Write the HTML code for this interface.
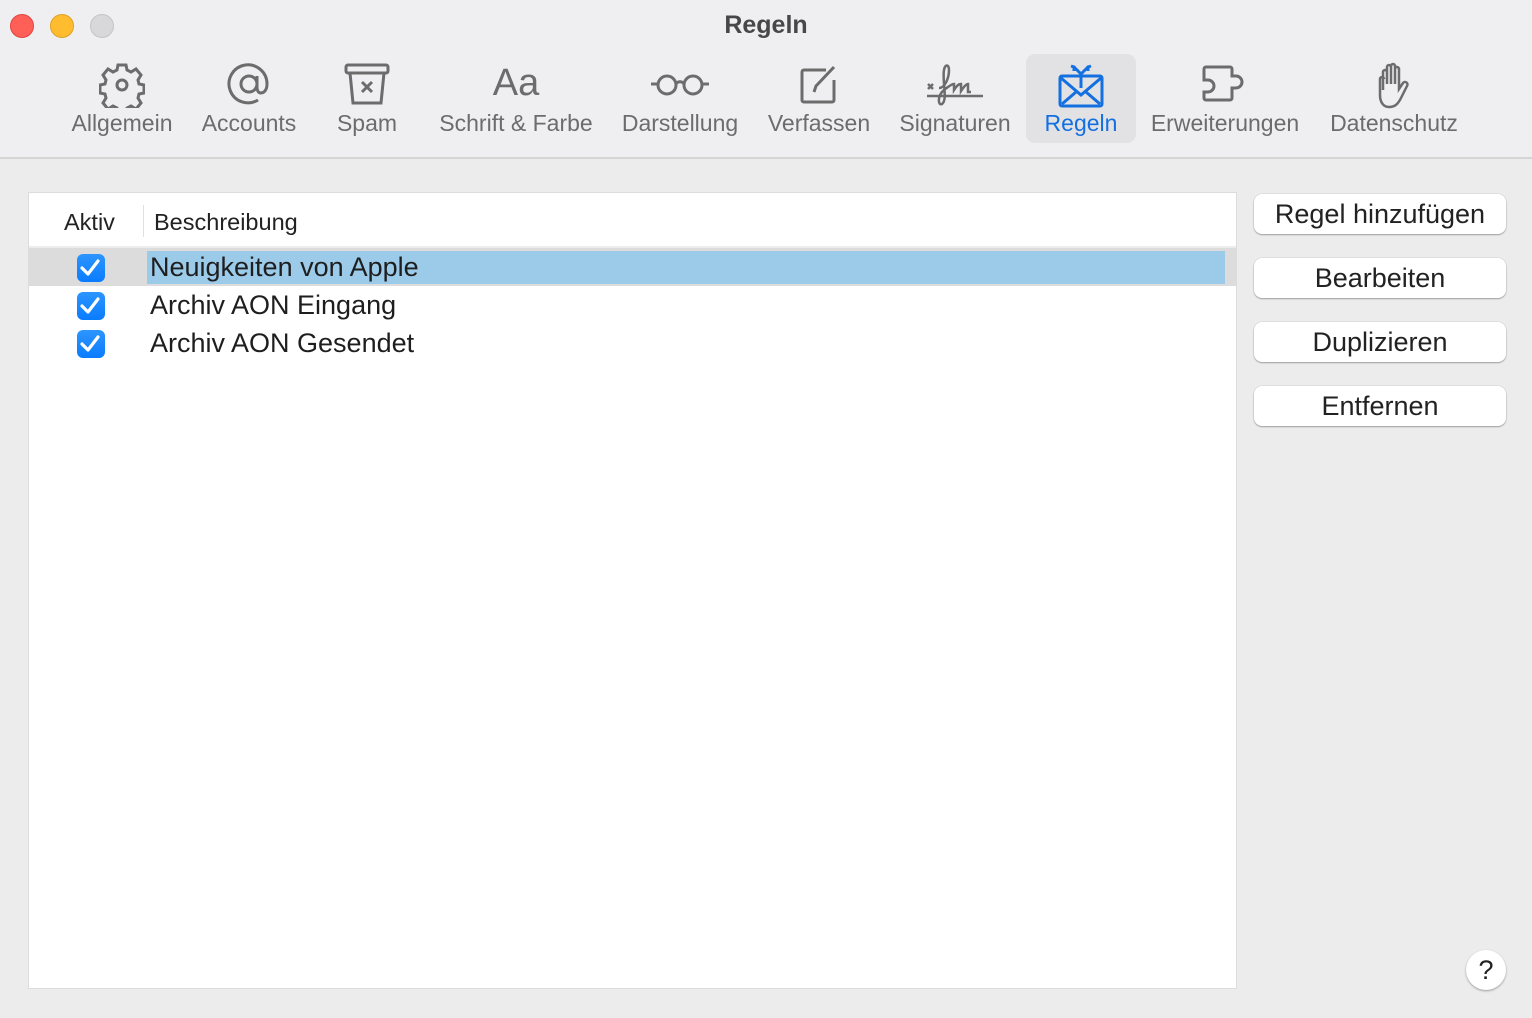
<!DOCTYPE html>
<html><head><meta charset="utf-8"><style>
*{margin:0;padding:0;box-sizing:border-box}
body{width:1532px;height:1018px;background:#ececec;font-family:"Liberation Sans",sans-serif;position:relative;overflow:hidden}
.tb{position:absolute;left:0;top:0;width:1532px;height:159px;background:#efeff1;border-bottom:2px solid #d5d5d5}
.dot{position:absolute;top:14px;width:24px;height:24px;border-radius:50%}
.title{position:absolute;left:0;width:1532px;top:11px;text-align:center;font-weight:bold;font-size:25px;color:#474747}
.it{position:absolute;top:54px;height:89px;text-align:center;color:#6c6c6c;font-size:23px}
.it svg{position:absolute;left:50%;top:8px;transform:translateX(-50%)}
.it span{position:absolute;left:-20px;right:-20px;top:56px;white-space:nowrap}
.sel{background:#e2e2e4;border-radius:9px;color:#1470e0}
.list{position:absolute;left:28px;top:192px;width:1209px;height:797px;background:#fff;border:1px solid #dcdcdc}
.hd{position:absolute;top:16px;font-size:23.5px;color:#222}
.row{position:absolute;left:0;width:1207px;height:38px;font-size:27px;color:#1e1e1e}
.row .t{position:absolute;left:121px;top:4px}
.cb{position:absolute;left:48px;top:6px;width:28px;height:28px;border-radius:6px;background:linear-gradient(#2d95ff,#0a7cff)}
.btn{position:absolute;left:1254px;width:252px;height:40px;background:#fff;border-radius:8px;box-shadow:0 1px 1.5px rgba(0,0,0,.3),0 0 0 .5px rgba(0,0,0,.1);text-align:center;font-size:27px;line-height:40px;color:#222}
</style></head><body>
<div class="tb">
<div class="dot" style="left:10px;background:#fe5f57;border:1px solid #e0443e"></div>
<div class="dot" style="left:50px;background:#febc2e;border:1px solid #dea123"></div>
<div class="dot" style="left:90px;background:#d8d8da;border:1px solid #c4c4c6"></div>
<div class="title">Regeln</div>

<div class="it" style="left:62px;width:120px"><svg width="46" height="46" viewBox="0 0 46 46" fill="none" stroke="#6c6c6c" stroke-width="3"><path d="M19 3h8l1 5 4 2 5-3 5 6-3 5 1 4 5 1v8l-5 1-1 4 3 5-5 6-5-3-4 2-1 5h-8l-1-5-4-2-5 3-5-6 3-5-1-4-5-1v-8l5-1 1-4-3-5 5-6 5 3 4-2z"/><circle cx="23" cy="23" r="5"/></svg><span>Allgemein</span></div>
<div class="it" style="left:190px;width:118px"><svg width="46" height="46" viewBox="0 0 46 46" fill="none" stroke="#6c6c6c" stroke-width="3"><path d="M32 38a19 19 0 1 1 9-16c0 6-3 9-6 9s-4-3-4-6V14"/><circle cx="23" cy="22" r="8"/></svg><span>Accounts</span></div>
<div class="it" style="left:320px;width:94px"><svg width="48" height="46" viewBox="0 0 48 46" fill="none" stroke="#6c6c6c" stroke-width="3"><rect x="3" y="3" width="42" height="8" rx="2"/><path d="M7 11l3 30h28l3-30M19 20l10 10M29 20l-10 10"/></svg><span>Spam</span></div>
<div class="it" style="left:430px;width:172px"><span style="top:8px;font-size:38px;color:#6c6c6c">Aa</span><span>Schrift &amp; Farbe</span></div>
<div class="it" style="left:614px;width:132px"><svg width="64" height="46" viewBox="0 0 64 46" fill="none" stroke="#6c6c6c" stroke-width="3"><circle cx="19" cy="23" r="9"/><circle cx="45" cy="23" r="9"/><path d="M28 22c2-3 6-3 8 0M10 22H3M54 22h7"/></svg><span>Darstellung</span></div>
<div class="it" style="left:760px;width:118px"><svg width="46" height="46" viewBox="0 0 46 46" fill="none" stroke="#6c6c6c" stroke-width="3"><path d="M30 8H8a2 2 0 0 0-2 2v28a2 2 0 0 0 2 2h28a2 2 0 0 0 2-2V18M18 30l2-6L38 5"/></svg><span>Verfassen</span></div>
<div class="it" style="left:893px;width:124px"><svg width="60" height="46" viewBox="0 0 60 46" fill="none" stroke="#6c6c6c" stroke-width="2.5"><path d="M2 34h56M3 22l5 5M8 22l-5 5M14 26c6 0 10-10 10-18 0-6-4-6-5 0-2 10 4 30-2 34-4 2-5-8 2-14 5-4 8-6 10-6v6c2-3 4-6 7-6v7c2-3 5-7 7-7v8h3"/></svg><span>Signaturen</span></div>
<div class="it sel" style="left:1026px;width:110px"><svg width="50" height="48" viewBox="0 0 50 48" fill="none" stroke="#1470e0" stroke-width="3"><rect x="4" y="14" width="42" height="30" rx="2"/><path d="M5 16l20 17 20-17M6 42l14-12M44 42l-14-12M25 26V12l-7-7M25 12l7-7M15 4l3 1v4M35 4l-3 1v4"/></svg><span>Regeln</span></div>
<div class="it" style="left:1146px;width:158px"><svg width="50" height="46" viewBox="0 0 50 46" fill="none" stroke="#6c6c6c" stroke-width="3"><path d="M6 5h24a2 2 0 0 1 2 2v7h4a6 6 0 0 1 0 12h-4v10a2 2 0 0 1-2 2H6a2 2 0 0 1-2-2v-6h4a6 6 0 0 0 0-12H4V7a2 2 0 0 1 2-2z"/></svg><span>Erweiterungen</span></div>
<div class="it" style="left:1324px;width:140px"><svg width="40" height="48" viewBox="0 0 40 48" fill="none" stroke="#6c6c6c" stroke-width="2.5"><path d="M9 28V10a2 2 0 0 1 4 0v12M13 22V5a2 2 0 0 1 4 0v17M17 22V4a2 2 0 0 1 4 0v18M21 22V7a2 2 0 0 1 4 0v20l4-6a2.5 2.5 0 0 1 4 3l-6 12c-3 6-6 9-12 9-5 0-9-4-9-12V17a2 2 0 0 1 4 0"/></svg><span>Datenschutz</span></div>
</div>

<div class="list">
<div class="hd" style="left:35px">Aktiv</div>
<div style="position:absolute;left:114px;top:12px;width:1px;height:32px;background:#e0e0e0"></div>
<div class="hd" style="left:125px">Beschreibung</div>
<div style="position:absolute;left:0;top:53px;width:1207px;height:2px;background:#ececec"></div>
<div class="row" style="top:55px;background:#dcdcdc"><div style="position:absolute;left:118px;top:3px;width:1078px;height:33px;background:#9ccbea"></div><div class="cb"></div><div class="t">Neuigkeiten von Apple</div></div>
<div class="row" style="top:93px"><div class="cb"></div><div class="t">Archiv AON Eingang</div></div>
<div class="row" style="top:131px"><div class="cb"></div><div class="t">Archiv AON Gesendet</div></div>
</div>
<svg style="position:absolute;left:0;top:0" width="130" height="400"><g fill="none" stroke="#fff" stroke-width="3.2" stroke-linecap="round" stroke-linejoin="round"><path d="M82 268l6 6 10-13M82 306l6 6 10-13M82 344l6 6 10-13"/></g></svg>

<div class="btn" style="top:194px">Regel hinzufügen</div>
<div class="btn" style="top:258px">Bearbeiten</div>
<div class="btn" style="top:322px">Duplizieren</div>
<div class="btn" style="top:386px">Entfernen</div>
<div style="position:absolute;left:1466px;top:950px;width:40px;height:40px;border-radius:50%;background:#fff;box-shadow:0 1px 2px rgba(0,0,0,.35);text-align:center;line-height:40px;font-size:27px;color:#222">?</div>
</body></html>
